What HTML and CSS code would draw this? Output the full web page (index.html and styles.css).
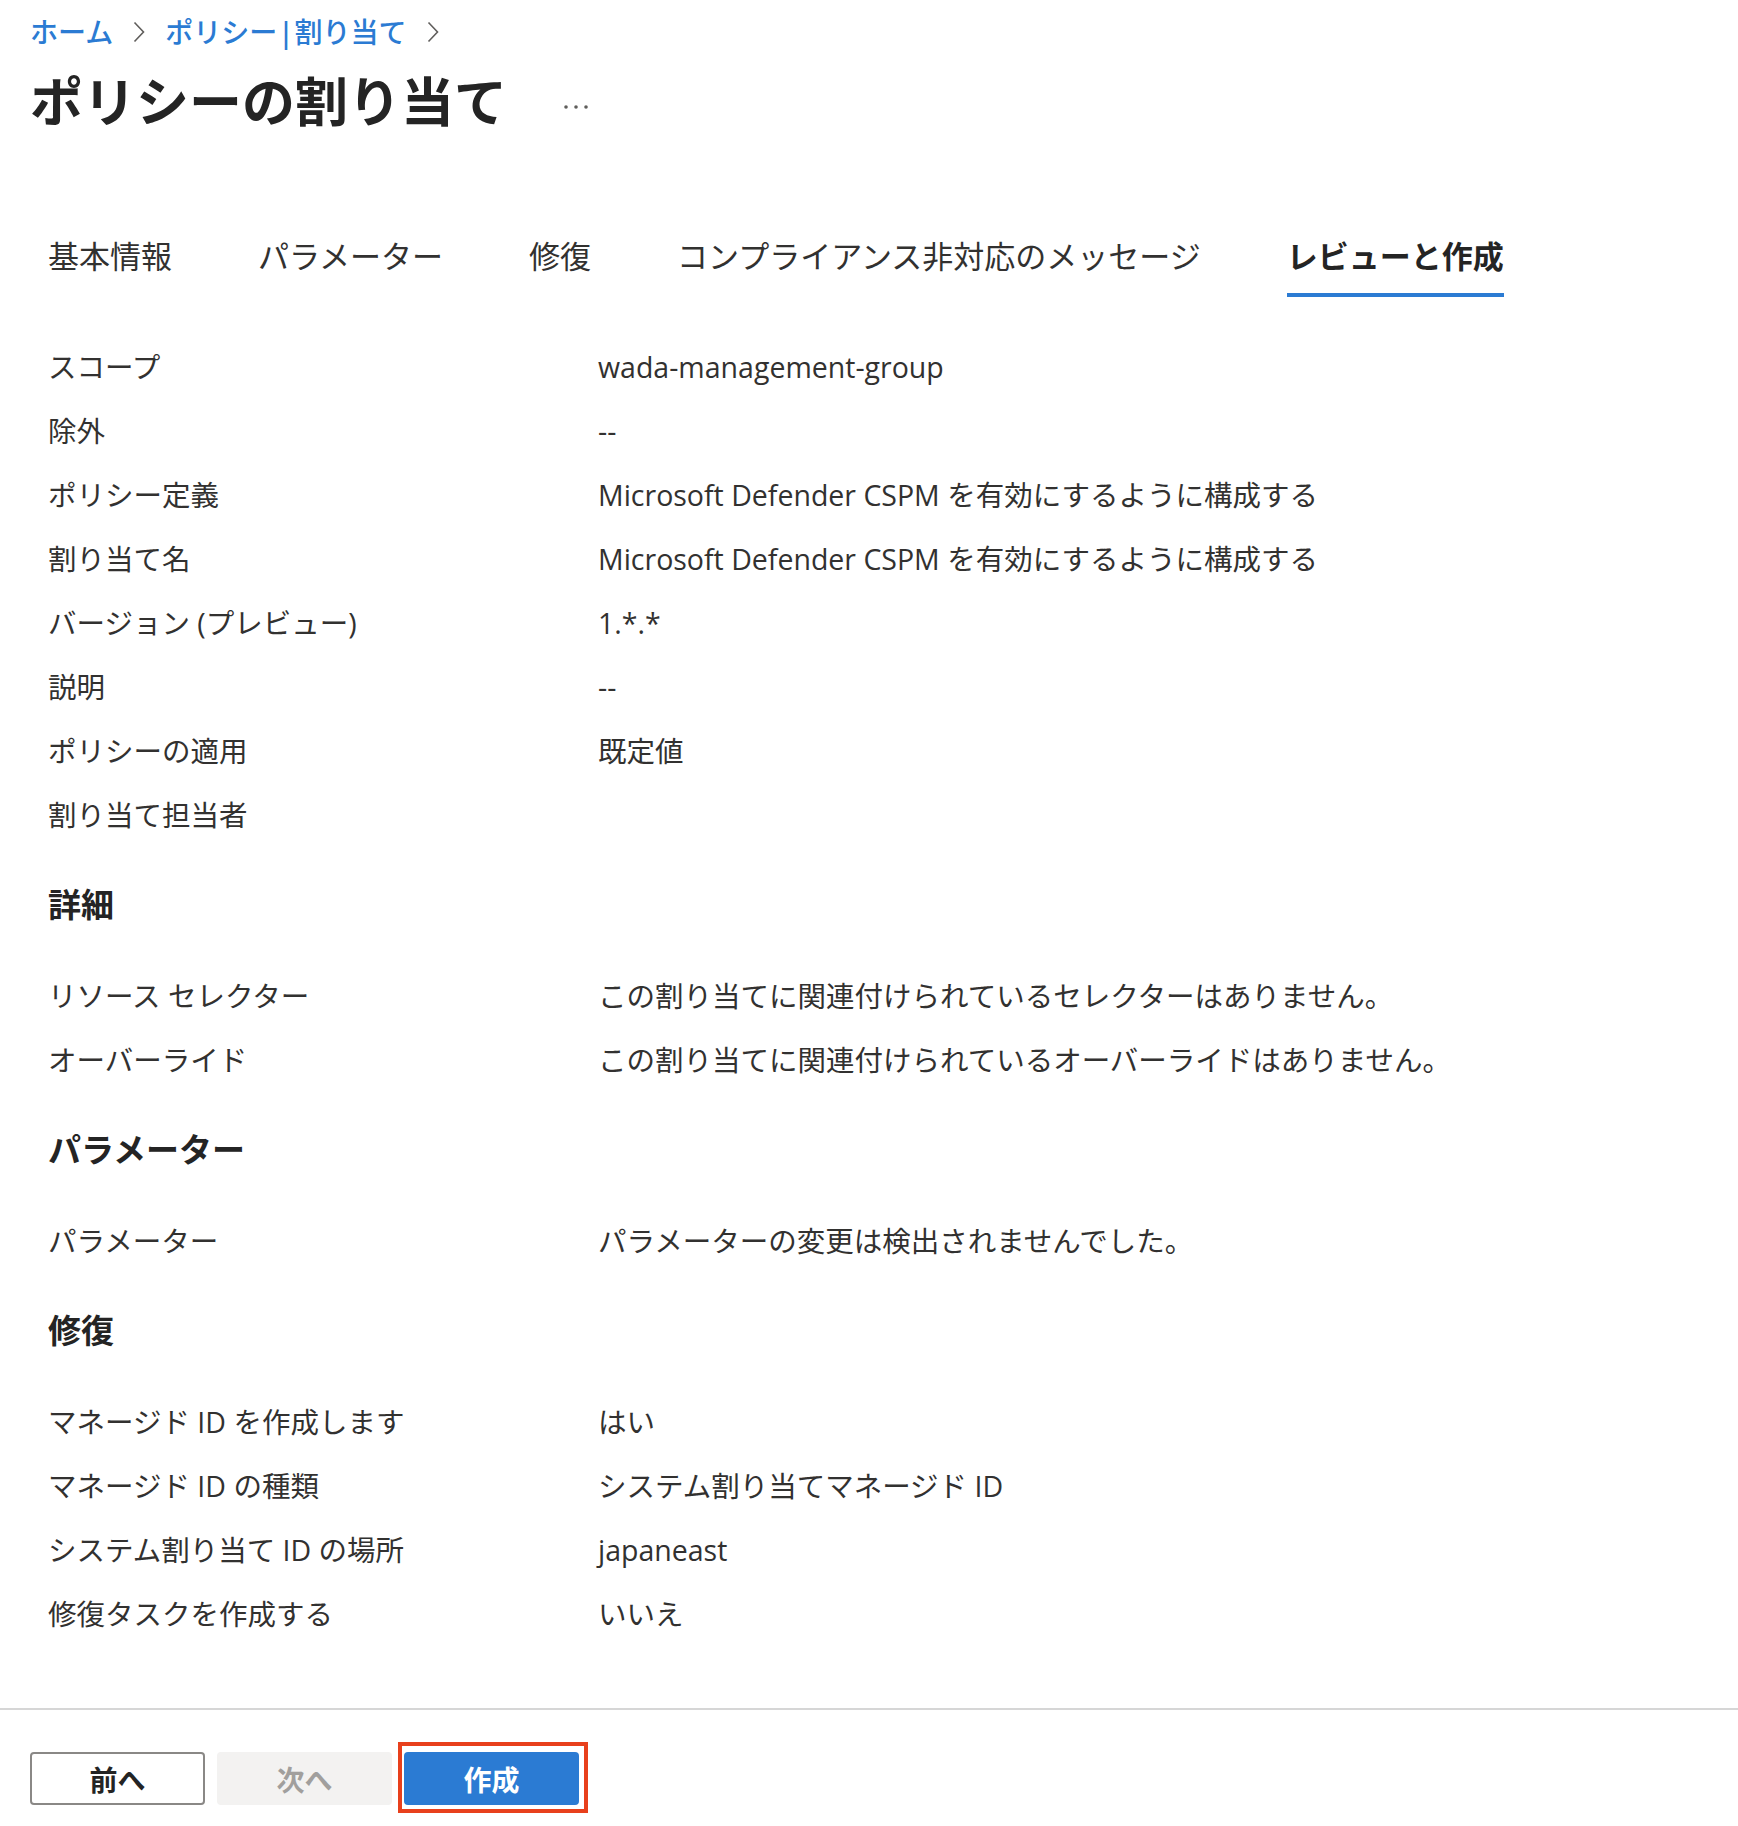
FILE: index.html
```html
<!DOCTYPE html>
<html lang="ja">
<head>
<meta charset="utf-8">
<title>ポリシーの割り当て</title>
<link rel="stylesheet" href="styles.css">
</head>
<body>
<div class="page">
  <header class="header">
    <nav class="breadcrumb">
      <a class="crumb">ホーム</a>
      <svg class="chev" width="12" height="22" viewBox="0 0 12 22"><path d="M1.5 1.5 L10.5 11 L1.5 20.5" fill="none" stroke="#605e5c" stroke-width="1.6"/></svg>
      <a class="crumb">ポリシー<span class="sep">|</span>割り当て</a>
      <svg class="chev" width="12" height="22" viewBox="0 0 12 22"><path d="M1.5 1.5 L10.5 11 L1.5 20.5" fill="none" stroke="#605e5c" stroke-width="1.6"/></svg>
    </nav>
    <div class="title-row">
      <h1 class="title">ポリシーの割り当て</h1>
      <svg class="more" width="26" height="6" viewBox="0 0 26 6" aria-label="その他"><circle cx="3" cy="3" r="1.8" fill="#605e5c"/><circle cx="13" cy="3" r="1.8" fill="#605e5c"/><circle cx="23" cy="3" r="1.8" fill="#605e5c"/></svg>
    </div>
  </header>

  <div class="tabs">
    <span class="tab">基本情報</span>
    <span class="tab">パラメーター</span>
    <span class="tab">修復</span>
    <span class="tab">コンプライアンス非対応のメッセージ</span>
    <span class="tab active">レビューと作成</span>
  </div>

  <main class="content">
    <div class="fields">
      <span class="label">スコープ</span><span class="value">wada-management-group</span>
      <span class="label">除外</span><span class="value">--</span>
      <span class="label">ポリシー定義</span><span class="value">Microsoft Defender CSPM を有効にするように構成する</span>
      <span class="label">割り当て名</span><span class="value">Microsoft Defender CSPM を有効にするように構成する</span>
      <span class="label">バージョン (プレビュー)</span><span class="value">1.*.*</span>
      <span class="label">説明</span><span class="value">--</span>
      <span class="label">ポリシーの適用</span><span class="value">既定値</span>
      <span class="label">割り当て担当者</span><span class="value"></span>
    </div>

    <h2 class="section">詳細</h2>
    <div class="fields">
      <span class="label">リソース セレクター</span><span class="value">この割り当てに関連付けられているセレクターはありません。</span>
      <span class="label">オーバーライド</span><span class="value">この割り当てに関連付けられているオーバーライドはありません。</span>
    </div>

    <h2 class="section">パラメーター</h2>
    <div class="fields">
      <span class="label">パラメーター</span><span class="value">パラメーターの変更は検出されませんでした。</span>
    </div>

    <h2 class="section">修復</h2>
    <div class="fields">
      <span class="label">マネージド ID を作成します</span><span class="value">はい</span>
      <span class="label">マネージド ID の種類</span><span class="value">システム割り当てマネージド ID</span>
      <span class="label">システム割り当て ID の場所</span><span class="value">japaneast</span>
      <span class="label">修復タスクを作成する</span><span class="value">いいえ</span>
    </div>
  </main>

  <footer class="footer">
    <button class="btn btn-outline">前へ</button>
    <button class="btn btn-disabled">次へ</button>
    <span class="highlight"><button class="btn btn-primary">作成</button></span>
  </footer>
</div>
</body>
</html>
```

FILE: styles.css
```css
html, body {
  margin: 0;
  padding: 0;
  background: #ffffff;
}

body {
  font-family: "Open Sans", "Noto Sans CJK JP", sans-serif;
  color: #323130;
}

.page {
  width: 1738px;
}

.header {
  padding: 12px 0 0 30px;
}

.breadcrumb {
  display: flex;
  align-items: center;
  gap: 20px;
  height: 40px;
  font-size: 28px;
  line-height: 40px;
}

.crumb {
  color: #2b7bd3;
  font-weight: 500;
  text-decoration: none;
}

.sep {
  margin: 0 1px;
  font-weight: 600;
}

.chev {
  display: block;
}

.title-row {
  display: flex;
  align-items: center;
  margin-top: 18px;
  height: 64px;
}

.title {
  margin: 0;
  font-size: 53px;
  line-height: 64px;
  font-weight: 700;
  color: #242424;
}

.more {
  display: block;
  margin: 10px 0 0 56px;
}

.tabs {
  display: flex;
  gap: 86px;
  padding-left: 48px;
  margin-top: 102px;
}

.tab {
  font-size: 31px;
  line-height: 40px;
  padding-bottom: 17px;
  border-bottom: 4px solid transparent;
  color: #323130;
}

.tab.active {
  font-weight: 700;
  border-bottom-color: #2b7bd3;
  color: #242424;
}

.content {
  padding: 38px 0 0 48px;
}

.fields {
  display: grid;
  grid-template-columns: 550px 1fr;
  grid-auto-rows: 64px;
  align-items: center;
  font-size: 28.5px;
  line-height: 40px;
  font-stretch: 95%;
}

.label,
.value {
  white-space: nowrap;
}

.section {
  margin: 26px 0 27px;
  font-size: 33px;
  line-height: 64px;
  font-weight: 700;
  color: #242424;
}

.footer {
  margin-top: 62px;
  border-top: 2px solid #d6d6d6;
  padding: 42px 30px 16px;
  display: flex;
  align-items: flex-start;
  gap: 12px;
}

.highlight {
  position: relative;
  display: flex;
}

.highlight::after {
  content: "";
  position: absolute;
  left: -6px;
  top: -10px;
  right: -9px;
  bottom: -8px;
  border: 4px solid #e8401c;
  pointer-events: none;
}

.btn {
  width: 175px;
  height: 53px;
  box-sizing: border-box;
  border-radius: 4px;
  font-family: inherit;
  font-size: 28px;
  font-weight: 700;
  display: flex;
  align-items: center;
  justify-content: center;
  padding: 0;
}

.btn-outline {
  background: #ffffff;
  border: 2px solid #8a8886;
  color: #242424;
}

.btn-disabled {
  background: #f3f2f1;
  border: none;
  color: #a19f9d;
}

.btn-primary {
  background: #2b7bd3;
  border: none;
  color: #ffffff;
}
```
